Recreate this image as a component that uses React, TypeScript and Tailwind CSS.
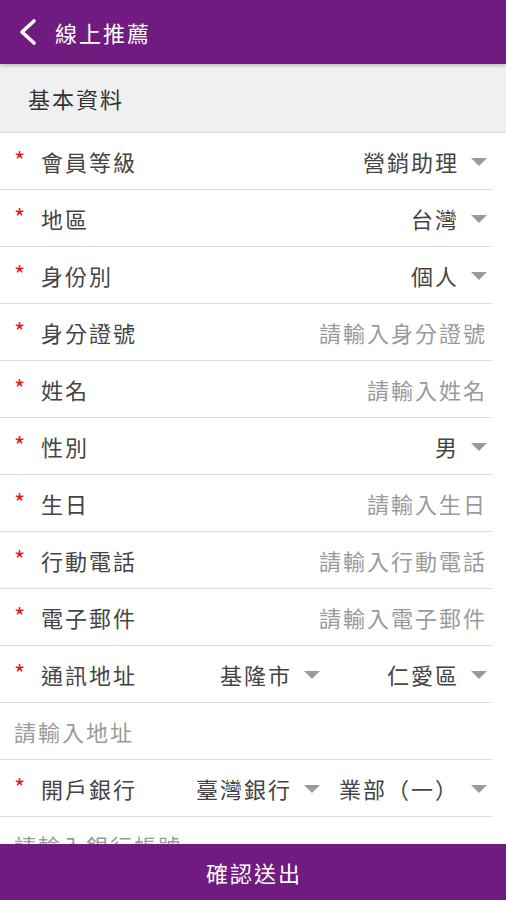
type Row =
  | { kind: "select"; label: string; value: string }
  | { kind: "input"; label: string; placeholder: string }
  | { kind: "pair"; label: string; a: string; b: string }
  | { kind: "plain"; placeholder: string };

const rows: Row[] = [
  { kind: "select", label: "會員等級", value: "營銷助理" },
  { kind: "select", label: "地區", value: "台灣" },
  { kind: "select", label: "身份別", value: "個人" },
  { kind: "input", label: "身分證號", placeholder: "請輸入身分證號" },
  { kind: "input", label: "姓名", placeholder: "請輸入姓名" },
  { kind: "select", label: "性別", value: "男" },
  { kind: "input", label: "生日", placeholder: "請輸入生日" },
  { kind: "input", label: "行動電話", placeholder: "請輸入行動電話" },
  { kind: "input", label: "電子郵件", placeholder: "請輸入電子郵件" },
  { kind: "pair", label: "通訊地址", a: "基隆市", b: "仁愛區" },
  { kind: "plain", placeholder: "請輸入地址" },
  { kind: "pair", label: "開戶銀行", a: "臺灣銀行", b: "業部（一）" },
  { kind: "plain", placeholder: "請輸入銀行帳號" },
];

const Caret = () => (
  <span className="ml-[12px] inline-block w-0 h-0 border-l-[8px] border-r-[8px] border-t-[8px] border-l-transparent border-r-transparent border-t-[#9a9a9a]" />
);

const Value = ({ text }: { text: string }) => (
  <span className="text-[#444] text-[22px] tracking-[2px] whitespace-nowrap">{text}</span>
);

const FormRow = ({ row }: { row: Row }) => (
  <div className="h-[57px] flex items-center border-b border-[#dcdcdc] pl-[14px] pr-[5px] pt-[1px]">
    {row.kind === "plain" ? (
      <span className="text-[#9a9a9a] text-[22px] tracking-[2px]">{row.placeholder}</span>
    ) : (
      <>
        <div className="flex items-center">
          <span className="w-[27px] text-[#e8141c] text-[24px] leading-none -mt-[4px]">*</span>
          <span className="text-[#444] text-[22px] tracking-[2px]">{row.label}</span>
        </div>
        <div className="flex-1 flex items-center justify-end">
          {row.kind === "select" && (
            <>
              <Value text={row.value} />
              <Caret />
            </>
          )}
          {row.kind === "input" && (
            <span className="text-[#9a9a9a] text-[22px] tracking-[2px]">{row.placeholder}</span>
          )}
          {row.kind === "pair" && (
            <>
              <div className="flex items-center justify-end">
                <Value text={row.a} />
                <Caret />
              </div>
              <div className="w-[167px] flex items-center justify-end">
                <Value text={row.b} />
                <Caret />
              </div>
            </>
          )}
        </div>
      </>
    )}
  </div>
);

export default function App() {
  return (
    <div
      className="w-[506px] h-[900px] flex flex-col overflow-hidden bg-white"
      style={{ fontFamily: '"Noto Sans CJK TC", "Noto Sans", sans-serif' }}
    >
      <header className="h-[64px] shrink-0 bg-[#701b80] flex items-center pl-[18px] shadow-[0_2px_3px_rgba(0,0,0,0.2)] z-10">
        <svg width="20" height="28" viewBox="0 0 20 28" fill="none">
          <polyline
            points="16,3 4,14 16,25"
            stroke="white"
            strokeWidth="3.6"
            strokeLinecap="round"
            strokeLinejoin="round"
          />
        </svg>
        <span className="ml-[17px] text-white text-[22px] tracking-[2px]">線上推薦</span>
      </header>
      <main className="flex-1 overflow-hidden">
        <div className="h-[69px] bg-[#f0f0f0] border-b border-[#dadada] flex items-center pl-[28px]">
          <span className="text-[#333] text-[22px] tracking-[2px]">基本資料</span>
        </div>
        <div className="pr-[14px]">
          {rows.map((r, i) => (
            <FormRow key={i} row={r} />
          ))}
        </div>
      </main>
      <footer className="h-[56px] shrink-0 bg-[#701b80] flex items-center justify-center">
        <span className="text-white text-[22px] tracking-[2px] pl-[2px]">確認送出</span>
      </footer>
    </div>
  );
}
